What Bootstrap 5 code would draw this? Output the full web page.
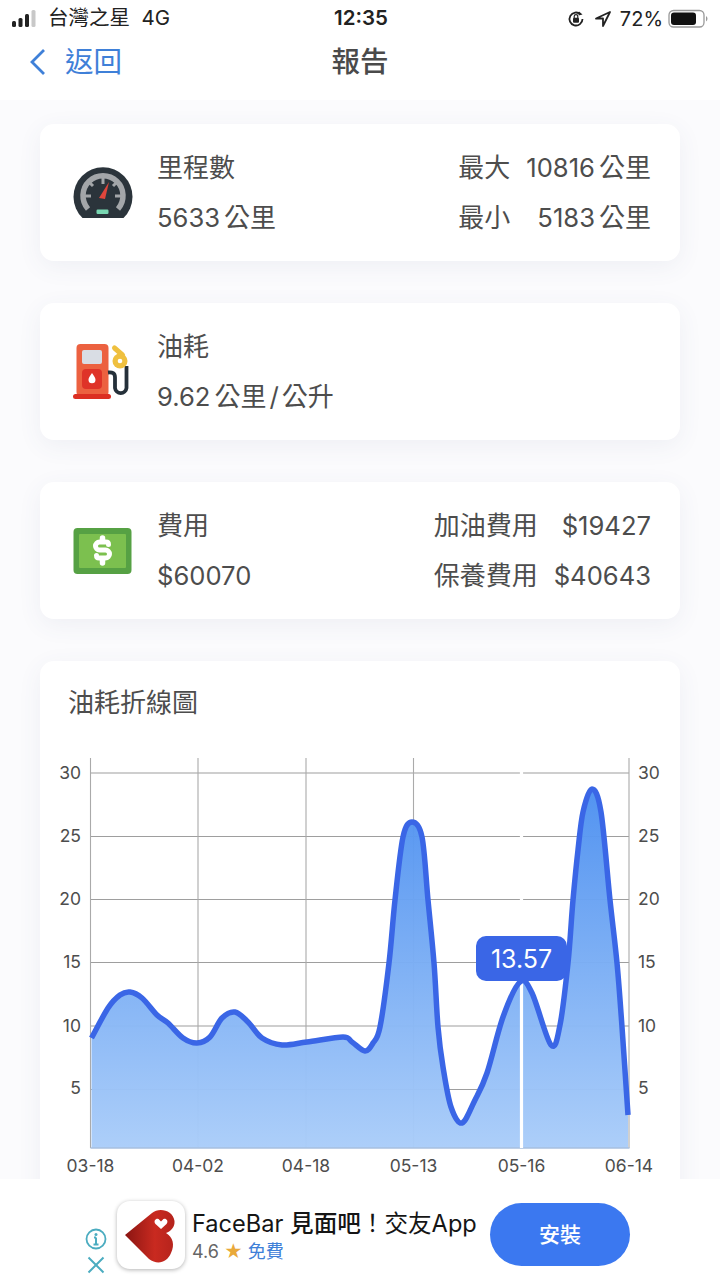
<!DOCTYPE html>
<html lang="zh-Hant">
<head>
<meta charset="utf-8">
<title>報告</title>
<link href="https://cdn.jsdelivr.net/npm/bootstrap@5.3.0/dist/css/bootstrap.min.css" rel="stylesheet">
<style>
html,body{margin:0;background:#fff;}
body{font-family:Inter,"Noto Sans CJK TC",sans-serif;color:#4d4d4d;}
.phone{width:720px;height:1280px;overflow:hidden;}
.statusbar{height:37px;flex:none;padding:0 10px 0 12px;font-size:20.5px;color:#222;}
.statusbar>div{flex:1 1 0;}
.statuscarrier{margin-left:2px;}
.batterytext{font-size:20px;margin-right:5px;}
.clock{font-weight:600;font-size:20.5px;}
.navrow{height:63px;flex:none;padding:0 0 13px 29px;font-size:28.5px;}
.navrow>div{flex:1 1 0;}
.backlink{color:#3f80d8;gap:19px;line-height:1;}
.pagetitle{font-weight:500;color:#4a4a4a;line-height:1;padding-right:29px;}
.content{background:#fbfbfd;padding:24px 40px 0;gap:42px;min-height:0;}
.panel{background:#fff;border-radius:14px;box-shadow:0 6px 24px rgba(70,90,130,.07);flex:none;}
.statpanel{height:137px;padding:18.5px 29px 18.5px 33px;font-size:26px;}
.statline{height:50px;line-height:50px;white-space:nowrap;}
.iconbox{width:60px;margin-right:24px;flex:none;}
.iconbox svg{display:block;}
.stats{display:grid;grid-template-columns:auto auto;column-gap:16px;grid-auto-rows:50px;line-height:50px;white-space:nowrap;}
.stats>span:nth-child(even){text-align:right;}
.figure-num{font-size:25.6px;}
.unit{margin-left:4px;}
.slashsep{margin:0 3px;}
.chartpanel{height:620px;}
.charttitle{font-size:26px;padding:24px 0 0 28px;line-height:36px;}
.chartpanel svg{display:block;}
.axislabel{font-family:Inter,sans-serif;font-size:17.5px;fill:#4d4d4d;}
.adbar{height:101px;flex:none;position:relative;background:#fff;padding:22px 90px 0 86px;z-index:1;}
.adclose{width:20px;margin-right:11px;gap:5px;padding-top:27px;}
.adicon{width:68px;height:68px;border-radius:13px;background:#fff;box-shadow:0 1px 4px rgba(0,0,0,.3);margin-right:7px;flex:none;}
.adicon svg{display:block;}
.adcopy{flex:none;}
.adtitle{font-size:23.6px;line-height:32px;color:#151515;white-space:nowrap;margin-top:7px;}
.adtitle b{font-weight:500;}
.adsub{font-size:18px;line-height:22px;color:#666;white-space:nowrap;margin-top:1px;}
.adfree{color:#3f80d8;}
.adstar{color:#e9a93a;}
.installbtn{width:140px;height:63px;border-radius:32px;background:#3b78f0;color:#fff;font-size:21px;font-weight:500;border:0;margin-left:auto;margin-top:2px;flex:none;padding:0;}
.installbtn:hover{background:#3b78f0;color:#fff;}
</style>
</head>
<body>
<div class="phone d-flex flex-column">
  <div class="statusbar d-flex align-items-center">
    <div class="d-flex align-items-center">
      <svg width="26" height="20" viewBox="0 0 26 20" class="me-2"><rect x="0" y="12" width="4" height="6" rx="1.5" fill="#222"/><rect x="6.500" y="9" width="4" height="9" rx="1.500" fill="#222"/><rect x="13" y="5" width="4" height="13" rx="1.500" fill="#222"/><rect x="19.500" y="1" width="4" height="17" rx="1.500" fill="#c8c8c8"/></svg>
      <span class="statuscarrier">台灣之星&nbsp;&nbsp;4G</span>
    </div>
    <div class="clock text-center">12:35</div>
    <div class="d-flex align-items-center justify-content-end">
      <svg width="20" height="20" viewBox="0 0 20 20" class="me-2"><path d="M16.500 10a6.500 6.500 0 1 1-2-4.700" fill="none" stroke="#222" stroke-width="1.800"/><path d="M13 2.500l3.500 3-4 1z" fill="#222"/><rect x="7" y="8.800" width="6" height="5" rx="1" fill="#222"/><path d="M8.200 9V7.500a1.800 1.800 0 0 1 3.600 0V9" fill="none" stroke="#222" stroke-width="1.200"/></svg>
      <svg width="18" height="18" viewBox="0 0 18 18" class="me-2"><path d="M16 2L2 8.500h7V16z" fill="none" stroke="#222" stroke-width="1.800" stroke-linejoin="round"/></svg>
      <span class="batterytext">72%</span>
      <svg width="42" height="20" viewBox="0 0 42 20"><rect x="1" y="1.500" width="35" height="16.500" rx="4.500" fill="none" stroke="#999" stroke-width="1.300"/><rect x="3" y="3.500" width="25" height="12.500" rx="3" fill="#111"/><path d="M38 7v5.500a3 3 0 0 0 1.500-2.700A3 3 0 0 0 38 7z" fill="#999"/></svg>
    </div>
  </div>
  <div class="navrow d-flex align-items-center">
    <div class="backlink d-flex align-items-center">
      <svg width="17" height="28" viewBox="0 0 17 28"><path d="M15 2L3 14l12 12" fill="none" stroke="#3f80d8" stroke-width="2.800"/></svg>
      <span>返回</span>
    </div>
    <div class="pagetitle text-center">報告</div>
    <div></div>
  </div>
  <div class="content flex-grow-1 d-flex flex-column overflow-hidden">
    <div class="panel statpanel d-flex align-items-center">
      <div class="iconbox">
        <svg width="60" height="53" viewBox="0 0 60 53"><path d="M9.500 52A29.500 29.500 0 1 1 50.500 52z" fill="#2b343b"/><path d="M15 43a20 20 0 1 1 30 0" fill="none" stroke="#a3a6a9" stroke-width="5.500"/><path d="M30 10v8M10 30h8M42 30h8M16.500 16.500l3.500 3.500M43.500 16.500L40 20" stroke="#a3a6a9" stroke-width="3"/><path d="M36 16L26 32l6 1z" fill="#e0463c"/><rect x="23.500" y="43.500" width="12" height="4.500" rx="1.200" fill="#79d7b2"/></svg>
      </div>
      <div class="flex-grow-1">
        <div class="statline">里程數</div>
        <div class="statline"><span class="figure-num">5633</span><span class="unit">公里</span></div>
      </div>
      <div class="stats">
        <span>最大</span><span><span class="figure-num">10816</span><span class="unit">公里</span></span>
        <span>最小</span><span><span class="figure-num">5183</span><span class="unit">公里</span></span>
      </div>
    </div>
    <div class="panel statpanel d-flex align-items-center">
      <div class="iconbox">
        <svg width="60" height="56" viewBox="0 0 60 56"><rect x="3.500" y="0" width="32" height="52" rx="4" fill="#ec6140"/><rect x="9" y="6" width="20" height="14" rx="2" fill="#d9dde4"/><rect x="9" y="25" width="20" height="20" rx="4" fill="#df3328"/><path d="M19 29c2.300 3.300 3.500 5 3.500 6.800a3.500 3.500 0 0 1-7 0c0-1.800 1.200-3.500 3.500-6.800z" fill="#fff"/><rect x="0" y="50" width="38" height="5" rx="2.500" fill="#dc2f22"/><path d="M35 28.500c4.500-.5 7 .5 7 5v10.500a5.800 5.800 0 0 0 11.500 0V22" fill="none" stroke="#25303a" stroke-width="3.800"/><path d="M41.500 4l8 7" fill="none" stroke="#efc03f" stroke-width="5" stroke-linecap="round"/><circle cx="47" cy="17" r="7.500" fill="#efc03f"/><circle cx="47" cy="17" r="2.300" fill="#fff"/></svg>
      </div>
      <div class="flex-grow-1">
        <div class="statline">油耗</div>
        <div class="statline"><span class="figure-num">9.62</span><span class="unit">公里</span><span class="slashsep">/</span><span>公升</span></div>
      </div>
    </div>
    <div class="panel statpanel d-flex align-items-center">
      <div class="iconbox">
        <svg width="60" height="48" viewBox="0 0 60 48"><rect x="0.500" y="1" width="58" height="46" rx="4" fill="#56a144"/><rect x="6" y="7" width="47" height="34" rx="1" fill="#7cc04f"/><path d="M35.500 17.500c0-1.500-1-2.500-2.500-2.500h-6.500a3.800 3.800 0 0 0 0 8h6a3.800 3.800 0 0 1 0 8h-6.500c-1.500 0-2.500-1-2.500-2.500" fill="none" stroke="#fff" stroke-width="5" stroke-linecap="round"/><path d="M29.500 11v3M29.500 32v4" stroke="#fff" stroke-width="5.500" stroke-linecap="round"/></svg>
      </div>
      <div class="flex-grow-1">
        <div class="statline">費用</div>
        <div class="statline"><span class="figure-num">$60070</span></div>
      </div>
      <div class="stats">
        <span>加油費用</span><span class="figure-num">$19427</span>
        <span>保養費用</span><span class="figure-num">$40643</span>
      </div>
    </div>
    <div class="panel chartpanel">
      <div class="charttitle">油耗折線圖</div>
      <svg width="640" height="460" viewBox="40 721 640 460">
        <defs>
          <linearGradient id="areaFill" x1="0" y1="789" x2="0" y2="1148" gradientUnits="userSpaceOnUse">
            <stop offset="0" stop-color="#4d90f0" stop-opacity=".97"/>
            <stop offset="1" stop-color="#aacdf9" stop-opacity=".97"/>
          </linearGradient>
        </defs>
        <g stroke="#9e9e9e" stroke-width="1.100">
          <path d="M90.500 773H629M90.500 836.500H629M90.500 899.500H629M90.500 962.500H629M90.500 1026H629M90.500 1089.500H629"/>
          <path d="M90.500 758V1148M198 758V1148M306 758V1148M413.500 758V1148M629 758V1148" stroke="#aaa"/>
        </g>
        <path id="curveFill" fill="url(#areaFill)"/>
        <path d="M90.500 1148H629.500" stroke="#a7bfdf" stroke-width="1.500"/>
        <path d="M521.500 758V1148" stroke="#fff" stroke-width="3.200"/>
        <path id="curveLine" fill="none" stroke="#3a66e6" stroke-width="5.500" stroke-linejoin="round"/>
        <rect x="476" y="936" width="91" height="45" rx="10" fill="#3a66e6"/>
        <text x="521.500" y="968" text-anchor="middle" fill="#fff" font-family="Inter,sans-serif" font-size="25">13.57</text>
        <g class="axislabel" text-anchor="end">
          <text x="81" y="779">30</text><text x="81" y="842">25</text><text x="81" y="905">20</text><text x="81" y="968">15</text><text x="81" y="1032">10</text><text x="81" y="1094">5</text>
        </g>
        <g class="axislabel">
          <text x="638" y="779">30</text><text x="638" y="842">25</text><text x="638" y="905">20</text><text x="638" y="968">15</text><text x="638" y="1032">10</text><text x="638" y="1094">5</text>
        </g>
        <g class="axislabel" text-anchor="middle">
          <text x="90.500" y="1172">03-18</text><text x="198" y="1172">04-02</text><text x="306" y="1172">04-18</text><text x="413.500" y="1172">05-13</text><text x="521.500" y="1172">05-16</text><text x="629" y="1172">06-14</text>
        </g>
      </svg>
    </div>
  </div>
  <div class="adbar d-flex align-items-start">
    <div class="adclose d-flex flex-column align-items-center">
      <svg width="22" height="22" viewBox="0 0 22 22"><circle cx="11" cy="11" r="9.500" fill="none" stroke="#4bacc0" stroke-width="1.800"/><circle cx="11" cy="6.500" r="1.500" fill="#4bacc0"/><path d="M11 9.500v7M8.500 16.500h5M9 9.500h2" stroke="#4bacc0" stroke-width="2" fill="none"/></svg>
      <svg width="20" height="20" viewBox="0 0 20 20"><path d="M2.500 2.500l15 15M17.500 2.500l-15 15" stroke="#4bacc0" stroke-width="2"/></svg>
    </div>
    <div class="adicon">
      <svg width="68" height="68" viewBox="0 0 68 68">
        <defs><linearGradient id="heartFill" x1="0" y1="0" x2="1" y2="0"><stop offset="0" stop-color="#8a1512"/><stop offset=".6" stop-color="#c92a20"/><stop offset="1" stop-color="#b5231c"/></linearGradient></defs>
        <path d="M8 34L35 12C42 6 56 9 57.500 20C58 26 54 30 49 32C56 36 58 44 54 52C50 62 40 64 32 58Z" fill="url(#heartFill)"/>
        <path d="M44 28l-5.500-5c-3-3.500 2-7 4-4l1.500 1.500 1.500-1.500c2-3 7 .5 4 4z" fill="#fff"/>
      </svg>
    </div>
    <div class="adcopy">
      <div class="adtitle">FaceBar <b>見面吧</b>！交友App</div>
      <div class="adsub">4.6 <span class="adstar">★</span> <span class="adfree">免費</span></div>
    </div>
    <button type="button" class="btn installbtn">安裝</button>
  </div>
</div>
<script src="https://cdn.jsdelivr.net/npm/bootstrap@5.3.0/dist/js/bootstrap.bundle.min.js"></script>
<script>
var pts=[[91.5,1038],[108,1008],[120,995],[130,992],[142,998],[157,1015],[168,1023],[183,1038],[197,1043],[210,1037],[222,1018],[235,1012],[248,1022],[262,1038],[282,1045],[307,1042],[343,1037],[352,1042],[365,1051],[373,1043],[380,1027],[389,963],[395,900],[403,837],[412,822],[422,837],[428,900],[434,963],[438,1027],[443,1067],[451,1107],[462,1123],[475,1100],[487,1073],[503,1017],[520,982],[532,993],[551,1045],[560,1025],[568,963],[573,900],[578,850],[583,812],[592,789],[601,812],[610,900],[617,963],[622,1027],[628,1115]];
var d='M'+pts[0].join(' ');
for(var i=0;i<pts.length-1;i++){
  var a=pts[Math.max(i-1,0)],b=pts[i],c=pts[i+1],e=pts[Math.min(i+2,pts.length-1)];
  d+='C'+(b[0]+(c[0]-a[0])/6).toFixed(1)+' '+(b[1]+(c[1]-a[1])/6).toFixed(1)+' '+(c[0]-(e[0]-b[0])/6).toFixed(1)+' '+(c[1]-(e[1]-b[1])/6).toFixed(1)+' '+c[0]+' '+c[1];
}
document.getElementById('curveLine').setAttribute('d',d);
document.getElementById('curveFill').setAttribute('d',d+'L628 1148L91.5 1148Z');
</script>
</body>
</html>
